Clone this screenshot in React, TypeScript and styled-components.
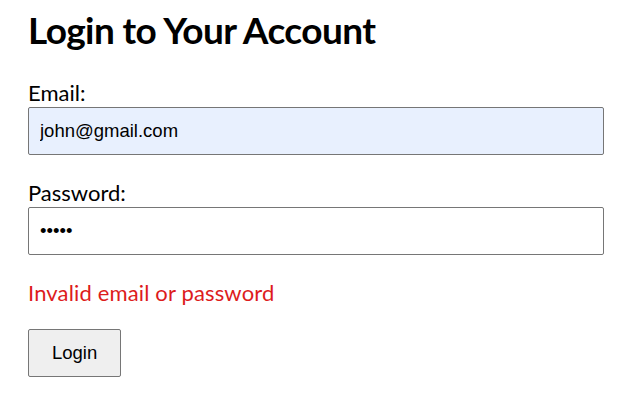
import React from "react";
import styled, { createGlobalStyle } from "styled-components";

const Global = createGlobalStyle`
  html, body { margin: 0; padding: 0; background: #ffffff; }
  body { font-family: Lato, "Open Sans", sans-serif; color: #000; }
`;

const Page = styled.main`
  display: flex;
  flex-direction: column;
  align-items: flex-start;
  padding: 8px 16px 0 28px;
  width: 576px;
`;

const Title = styled.h1`
  margin: 0 0 28px 0;
  font-size: 37px;
  line-height: 44px;
  font-weight: 700;
  letter-spacing: -0.6px;
`;

const Form = styled.form`
  display: flex;
  flex-direction: column;
  align-items: flex-start;
  width: 100%;
`;

const Field = styled.div`
  display: flex;
  flex-direction: column;
  gap: 1px;
  width: 100%;
  margin-bottom: 25px;
`;

const Label = styled.label`
  font-size: 22px;
  line-height: 26px;
`;

const Input = styled.input<{ $autofill?: boolean }>`
  box-sizing: border-box;
  width: 100%;
  height: 48px;
  padding: 0 11px;
  border: 1px solid #767676;
  border-radius: 2px;
  background: ${(p) => (p.$autofill ? "#e8f0fe" : "#ffffff")};
  font-family: "Liberation Sans", Arial, sans-serif;
  font-size: 18.5px;
  color: #000;
  outline: none;
`;

const ErrorText = styled.p`
  margin: 0 0 23px 0;
  font-size: 22px;
  line-height: 26px;
  letter-spacing: 0.15px;
  color: #dd1c1c;
`;

const Button = styled.button`
  box-sizing: border-box;
  height: 48px;
  padding: 0 23px;
  border: 1px solid #767676;
  border-radius: 2px;
  background: #efefef;
  font-family: "Liberation Sans", Arial, sans-serif;
  font-size: 18.5px;
  color: #000;
`;

export default function App() {
  return (
    <>
      <Global />
      <Page>
        <Title>Login to Your Account</Title>
        <Form onSubmit={(e) => e.preventDefault()}>
          <Field>
            <Label htmlFor="email">Email:</Label>
            <Input id="email" type="email" $autofill defaultValue="john@gmail.com" />
          </Field>
          <Field>
            <Label htmlFor="password">Password:</Label>
            <Input id="password" type="password" defaultValue="12345" />
          </Field>
          <ErrorText>Invalid email or password</ErrorText>
          <Button type="submit">Login</Button>
        </Form>
      </Page>
    </>
  );
}
